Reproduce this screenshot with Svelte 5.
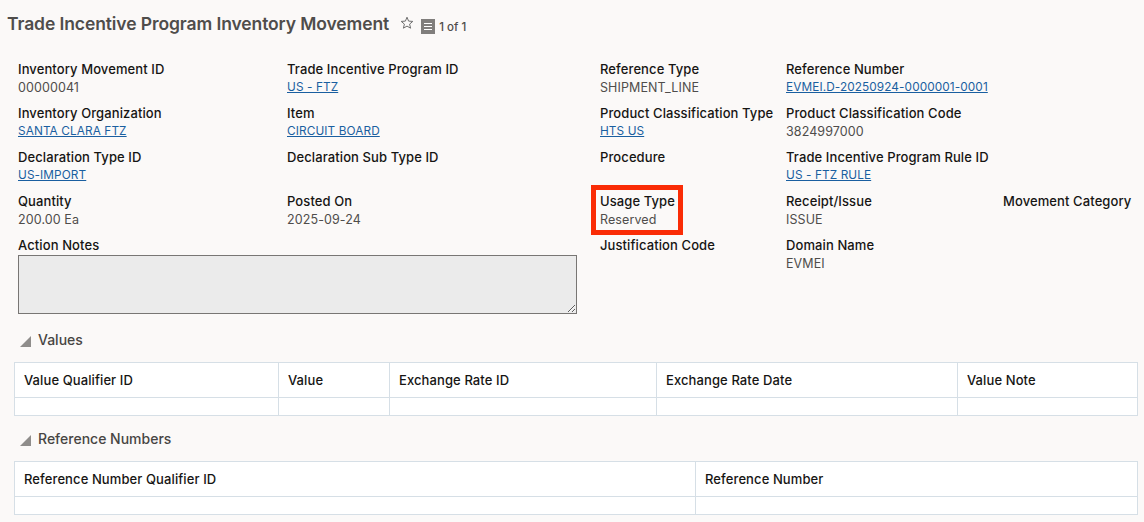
<script lang="ts">
  const rows = [
    [
      { label: 'Inventory Movement ID', value: '00000041' },
      { label: 'Trade Incentive Program ID', value: 'US - FTZ', link: true },
      { label: 'Reference Type', value: 'SHIPMENT_LINE' },
      { label: 'Reference Number', value: 'EVMEI.D-20250924-0000001-0001', link: true },
    ],
    [
      { label: 'Inventory Organization', value: 'SANTA CLARA FTZ', link: true },
      { label: 'Item', value: 'CIRCUIT BOARD', link: true },
      { label: 'Product Classification Type', value: 'HTS US', link: true },
      { label: 'Product Classification Code', value: '3824997000' },
    ],
    [
      { label: 'Declaration Type ID', value: 'US-IMPORT', link: true },
      { label: 'Declaration Sub Type ID', value: '' },
      { label: 'Procedure', value: '' },
      { label: 'Trade Incentive Program Rule ID', value: 'US - FTZ RULE', link: true },
    ],
    [
      { label: 'Quantity', value: '200.00 Ea' },
      { label: 'Posted On', value: '2025-09-24' },
      { label: 'Usage Type', value: 'Reserved', marked: true },
      { label: 'Receipt/Issue', value: 'ISSUE' },
      { label: 'Movement Category', value: '' },
    ],
  ];

  const tables = [
    {
      title: 'Values',
      columns: [
        { name: 'Value Qualifier ID', width: 264 },
        { name: 'Value', width: 111 },
        { name: 'Exchange Rate ID', width: 267 },
        { name: 'Exchange Rate Date', width: 301 },
        { name: 'Value Note', width: 180 },
      ],
    },
    {
      title: 'Reference Numbers',
      columns: [
        { name: 'Reference Number Qualifier ID', width: 681 },
        { name: 'Reference Number', width: 442 },
      ],
    },
  ];
</script>

<main class="page">
  <header class="head">
    <h1>Trade Incentive Program Inventory Movement</h1>
    <svg class="star" viewBox="0 0 14 14" width="14" height="14" aria-hidden="true">
      <path d="M7 1.2l1.6 3.9 4.2.3-3.2 2.7 1 4.1L7 10.1l-3.6 2.1 1-4.1-3.2-2.7 4.2-.3z" fill="none" stroke="#6f6f6f" stroke-width="1" />
    </svg>
    <span class="doc" aria-hidden="true"><i></i><i></i><i></i></span>
    <span class="count">1 of 1</span>
  </header>

  <section class="form">
    {#each rows as row}
      {#each row as f}
        <div class="field" class:marked={f.marked}>
          <div class="label">{f.label}</div>
          {#if f.link}
            <a class="value" href="#top">{f.value}</a>
          {:else}
            <div class="value">{f.value}</div>
          {/if}
        </div>
      {/each}
      {#if row.length < 5}<div></div>{/if}
    {/each}

    <div class="field notes">
      <div class="label">Action Notes</div>
      <textarea readonly></textarea>
    </div>
    <div class="field">
      <div class="label">Justification Code</div>
    </div>
    <div class="field">
      <div class="label">Domain Name</div>
      <div class="value">EVMEI</div>
    </div>
  </section>

  {#each tables as t}
    <section class="block">
      <h2><span class="tri"></span>{t.title}</h2>
      <table>
        <colgroup>
          {#each t.columns as c}<col style="width: {c.width}px" />{/each}
        </colgroup>
        <thead>
          <tr>{#each t.columns as c}<th>{c.name}</th>{/each}</tr>
        </thead>
        <tbody>
          <tr>{#each t.columns as c}<td></td>{/each}</tr>
        </tbody>
      </table>
    </section>
  {/each}
</main>

<style>
  :global(body) {
    margin: 0;
    background: #fbf9f8;
    font-family: Inter, "Liberation Sans", sans-serif;
    color: #161513;
  }
  .page {
    height: 522px;
    overflow: hidden;
    padding: 0 6px 0 14px;
    box-sizing: border-box;
  }
  .head {
    display: flex;
    align-items: center;
    height: 47px;
    margin-left: -7px;
  }
  h1 {
    margin: 0;
    font-size: 17.5px;
    font-weight: 600;
    color: #4f4d4b;
    letter-spacing: -0.1px;
  }
  .star { margin-left: 11px; margin-top: -1px; }
  .doc {
    width: 14px;
    height: 15px;
    margin-left: 7px;
    margin-top: 5px;
    background: #807e7c;
    display: flex;
    flex-direction: column;
    justify-content: center;
    align-items: center;
    gap: 2px;
  }
  .doc i { display: block; width: 8px; height: 1px; background: #fff; }
  .count {
    margin-left: 4px;
    margin-top: 7px;
    font-size: 11.5px;
    font-weight: 500;
    color: #4f4d4b;
  }
  .form {
    display: grid;
    grid-template-columns: 269px 313px 186px 217px 1fr;
    grid-template-rows: repeat(4, 44px) auto;
    padding-left: 4px;
    margin-top: 14px;
    margin-bottom: 16px;
  }
  .field { position: relative; font-size: 13px; line-height: 18px; }
  .label {
    font-weight: 500;
    line-height: 17px;
    margin-bottom: 1px;
    color: #161513;
    white-space: nowrap;
    letter-spacing: 0.1px;
  }
  .value { font-size: 12.5px; color: #4f4d4b; white-space: nowrap; display: block; letter-spacing: 0.1px; }
  a.value { font-size: 11.8px; line-height: 16px; color: #1a5fa0; text-decoration: underline; }
  .marked::after {
    content: '';
    position: absolute;
    left: -9px;
    top: -8px;
    box-sizing: border-box;
    width: 92px;
    height: 50px;
    border: 5px solid #fa2c06;
  }
  .notes { grid-column: span 2; }
  textarea {
    display: block;
    box-sizing: border-box;
    width: 559px;
    height: 59px;
    margin: 0;
    background: #ebebeb;
    border: 1px solid #787674;
    border-radius: 0;
  }
  .block h2 {
    display: flex;
    align-items: center;
    box-sizing: border-box;
    margin: 0;
    height: 20px;
    padding: 0 0 2px 6px;
    font-size: 14px;
    font-weight: 500;
    color: #474543;
  }
  .block { margin-top: 13px; }
  .form + .block { margin-top: 0; }
  .tri {
    width: 11px;
    height: 11px;
    margin-right: 7px;
    margin-top: 5px;
    background: #8f8d8b;
    clip-path: polygon(100% 0, 100% 100%, 0 100%);
  }
  table {
    width: 1123px;
    margin-top: 12px;
    border-collapse: collapse;
    table-layout: fixed;
    background: #fff;
    font-size: 13px;
  }
  th, td { border: 1px solid #d6dfe6; padding: 0 9px; }
  th {
    height: 34px;
    text-align: left;
    font-weight: 500;
    color: #161513;
    letter-spacing: 0.1px;
  }
  td { height: 17px; padding-top: 0; padding-bottom: 0; }
</style>
